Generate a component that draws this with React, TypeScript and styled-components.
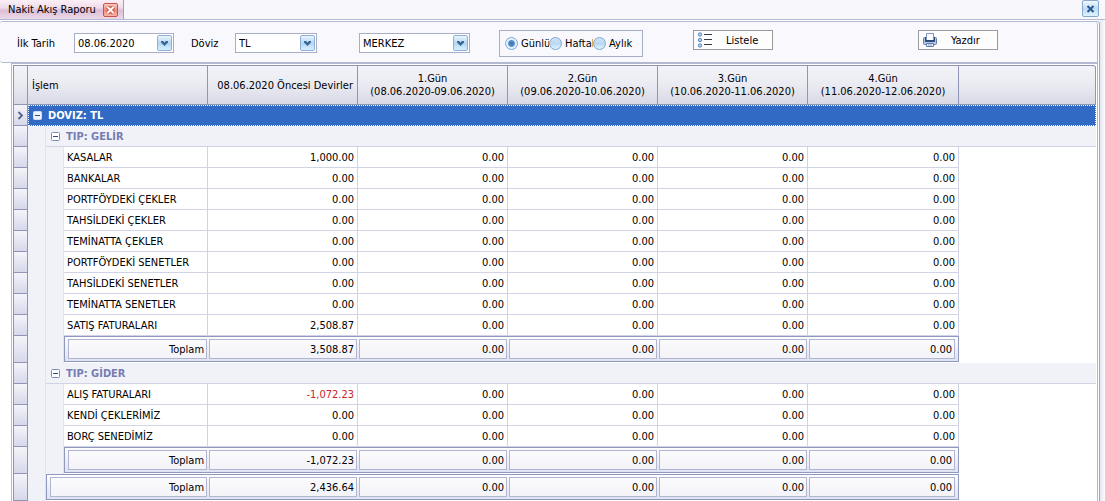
import React from "react";
import styled, { createGlobalStyle, css } from "styled-components";

const line = "#9095b8";
const softLine = "#d0d4e6";
const frameLine = "#b4b9d2";

const GlobalStyle = createGlobalStyle`
  *, *::before, *::after { box-sizing: border-box; }
  html, body { margin: 0; padding: 0; background: #fff; }
  body, button, input, select {
    font-family: "DejaVu Sans Condensed", "DejaVu Sans", sans-serif;
    font-size: 11px;
    line-height: 13px;
    color: #000;
  }
`;

const Page = styled.main`
  display: flex;
  flex-direction: column;
  min-height: 100vh;
  padding-right: 5px;
  background: linear-gradient(to left, #fbfbfd, #e4e6f0 5px, #fff 5px);
`;

const TabStrip = styled.header`
  display: flex;
  align-items: flex-start;
  justify-content: space-between;
  height: 20px;
  margin-right: -5px;
  padding-right: 6px;
  background: #f8f8fc;
  border-bottom: 1px solid ${frameLine};
`;

const Tab = styled.div`
  display: flex;
  align-items: center;
  gap: 7px;
  height: 19px;
  padding: 0 5px 0 8px;
  border-right: 1px solid #a99bb8;
  background: linear-gradient(#fbf0f7, #f0dcea 40%, #dcbdd6 55%, #ecd9e8);
`;

const CloseTab = styled.button`
  display: flex;
  align-items: center;
  justify-content: center;
  width: 15px;
  height: 14px;
  padding: 0;
  border: 1px solid #cc4f48;
  border-radius: 2px;
  background: linear-gradient(#fbd0c8, #f0897c 50%, #f8b4a6);
`;

const CloseWindow = styled.button`
  display: flex;
  align-items: center;
  justify-content: center;
  width: 17px;
  height: 17px;
  padding: 0;
  border: 1px solid #86a9cc;
  border-radius: 2px;
  background: linear-gradient(#f2f9ff, #bfdcf4 50%, #def3ff);
`;

const Panel = styled.section`
  flex: 1;
  display: flex;
  flex-direction: column;
  margin-top: 1px;
  border-top: 1px solid ${frameLine};
  border-right: 1px solid #a3a7c4;
  border-radius: 3px 3px 0 0;
`;

const Toolbar = styled.form`
  display: flex;
  align-items: flex-start;
  height: 41px;
  margin-right: 1px;
  padding: 8px 99px 0 17px;
  background: #f9f9fd;
  border-bottom: 1px solid ${frameLine};
  border-right: 1px solid ${frameLine};
  border-radius: 3px 3px 0 3px;
`;

const FieldLabel = styled.label<{ $width: number }>`
  width: ${(p) => p.$width}px;
  margin-top: 7px;
  white-space: nowrap;
`;

const Field = styled.div<{ $width: number; $gap: number }>`
  position: relative;
  width: ${(p) => p.$width}px;
  height: 20px;
  margin-top: 3px;
  margin-right: ${(p) => p.$gap}px;
  border: 1px solid #a9aec8;
  background: #fff;
`;

const controlText = css`
  width: 100%;
  height: 18px;
  padding: 0 18px 0 3px;
  border: 0;
  outline: 0;
  background: transparent;
`;

const DateInput = styled.input`
  ${controlText}
`;

const Select = styled.select`
  ${controlText}
  appearance: none;
`;

const DropMark = styled.span`
  position: absolute;
  top: 1px;
  right: 1px;
  display: flex;
  align-items: center;
  justify-content: center;
  width: 15px;
  height: 16px;
  border: 1px solid #8fb0d4;
  border-radius: 2px;
  background: linear-gradient(#eaf5fe, #b4d6f2 50%, #d6f0ff);
  pointer-events: none;
`;

const RadioGroup = styled.fieldset`
  display: flex;
  align-items: center;
  width: 144px;
  height: 27px;
  margin: 0 50px 0 0;
  padding: 0 0 0 5px;
  border: 1px solid #a9aec8;
`;

const RadioLabel = styled.label`
  display: flex;
  align-items: center;
  gap: 3px;
  width: 44px;
  overflow: hidden;
  white-space: nowrap;
`;

const Radio = styled.input`
  appearance: none;
  flex: none;
  width: 13px;
  height: 13px;
  margin: 0;
  border: 1px solid #7fa6d0;
  border-radius: 50%;
  background: linear-gradient(#d3e4f4, #b9d8f1 50%, #def4ff);

  &:checked {
    background: radial-gradient(circle, #4379ae 0 1px, #5e97cb 3px, #e0f2fe 4px);
  }
`;

const ToolButton = styled.button`
  display: flex;
  align-items: center;
  width: 80px;
  height: 20px;
  padding: 0 0 0 3px;
  border: 1px solid #9b9b9e;
  background: #fdfdfe;

  & > svg { flex: none; margin-right: 13px; }
`;

const Spacer = styled.div`
  flex: 1;
`;

const GridFrame = styled.div`
  flex: 1;
  margin-right: 1px;
  margin-left: 11px;
  padding: 1px 1px 0 1px;
  border-top: 1px solid ${frameLine};
  border-left: 1px solid ${frameLine};
  border-right: 1px solid ${frameLine};
  background: #fff;
`;

const Grid = styled.table`
  width: 100%;
  table-layout: fixed;
  border-collapse: separate;
  border-spacing: 0;
  border-left: 1px solid ${line};

  th, td { padding: 0; }
`;

const HeadCell = styled.th<{ $align?: string; $last?: boolean }>`
  height: 40px;
  border-top: 1px solid ${line};
  border-bottom: 1px solid ${line};
  border-right: 1px solid ${line};
  border-top-right-radius: ${(p) => (p.$last ? 3 : 0)}px;
  background: linear-gradient(#f3f3f9, #eaeaf2 50%, #d9d9e6);
  font-weight: normal;
  text-align: ${(p) => p.$align || "center"};

  & > span { display: block; padding: 0 4px; white-space: nowrap; }
`;

const Marker = styled.td`
  border-right: 1px solid ${line};
  border-bottom: 1px solid ${line};
  background: linear-gradient(#f4f4fa, #d6d8ea);

  & > svg { display: block; margin: 0 auto; }
`;

const Indent = styled.td`
  background: #f1f2f8;
  border-right: 1px solid #e0e3f0;
`;

const RootGroup = styled.td`
  height: 21px;
  background: #316ac5;
  color: #fff;
  font-weight: bold;
  outline: 1px dotted #fff;
  outline-offset: -1px;
`;

const SubGroup = styled.td`
  height: 21px;
  background: #f1f2f8;
  border-bottom: 1px solid ${softLine};
  color: #767db1;
  font-weight: bold;
`;

const GroupTitle = styled.div`
  display: flex;
  align-items: center;
  gap: 6px;
  padding-left: 5px;
`;

const Toggle = styled.button`
  display: flex;
  width: 9px;
  height: 9px;
  padding: 0;
  border: 0;
  background: none;
`;

const Cell = styled.td<{ $number?: boolean; $negative?: boolean }>`
  height: 21px;
  border-right: 1px solid ${softLine};
  border-bottom: 1px solid ${softLine};
  background: #fff;
  color: ${(p) => (p.$negative ? "#d0202a" : "#000")};
  text-align: ${(p) => (p.$number ? "right" : "left")};
  white-space: nowrap;

  && { padding: 0 3px; }
`;

const TotalFrame = styled.div<{ $first?: boolean; $last?: boolean }>`
  height: 26px;
  margin-bottom: 1px;
  padding: 2px ${(p) => (p.$last ? 3 : 1)}px 2px ${(p) => (p.$first ? 3 : 1)}px;
  border: solid #9198bd;
  border-width: 1px ${(p) => (p.$last ? 1 : 0)}px 1px ${(p) => (p.$first ? 1 : 0)}px;
  background: linear-gradient(#fdfdff, #dfe2f1);
`;

const TotalBox = styled.div`
  height: 20px;
  padding: 3px 2px 0 0;
  border: 1px solid #b0b5d2;
  background: linear-gradient(#fbfbfd, #f3f3f8);
  text-align: right;
  white-space: nowrap;
`;

function Chevron() {
  return (
    <svg width="9" height="8" viewBox="0 0 9 8">
      <path d="M1 2h2L4.500 3.500l1.500-1.500h2v1.500L4.500 7 1 3.500z" fill="#3a6796" />
    </svg>
  );
}

function Cross({ color, outline }: { color: string; outline?: string }) {
  return (
    <svg width="11" height="10" viewBox="0 0 11 10">
      {outline && <path d="M2.500 2l6 6M8.500 2l-6 6" stroke={outline} strokeWidth="4" />}
      <path d="M2.500 2l6 6M8.500 2l-6 6" stroke={color} strokeWidth="2" />
    </svg>
  );
}

function Minus({ inverse }: { inverse?: boolean }) {
  return (
    <svg width="9" height="9" viewBox="0 0 9 9">
      <rect x=".5" y=".5" width="8" height="8" rx="1" fill={inverse ? "#eef2fb" : "#fff"} stroke={inverse ? "#cfdcf2" : "#7d8dba"} />
      <path d="M2 4.500h5" stroke="#2b4a86" />
    </svg>
  );
}

function ListIcon() {
  return (
    <svg width="16" height="16" viewBox="0 0 16 16">
      {[2.5, 8, 13.5].map((y) => (
        <circle key={y} cx="3" cy={y} r="1.700" fill="#b5d6f2" stroke="#5a86b8" />
      ))}
      <path d="M7 2.500h8M7 7.500h8M7 12.500h8" stroke="#333a48" />
    </svg>
  );
}

function PrintIcon() {
  return (
    <svg width="16" height="16" viewBox="0 0 16 16">
      <path d="M1.500 6.500q0-1 1-1h11q1 0 1 1v5q0 1-1 1h-11q-1 0-1-1z" fill="#b7c8e2" stroke="#5f7cab" />
      <path d="M4.500 1.500h7v7h-7z" fill="#f7faff" stroke="#7e96bd" />
      <path d="M3.500 5v4.500h9V5" fill="none" stroke="#2a4372" />
      <path d="M4 8h8v2H4z" fill="#2f4b7d" />
      <path d="M4.500 11.500h7v3h-7z" fill="#eef5ff" stroke="#5f7cab" />
      <path d="M6 13h4" stroke="#88a2c8" />
    </svg>
  );
}

function RowPointer() {
  return (
    <svg width="7" height="9" viewBox="0 0 7 9">
      <path d="M1.500 1l3.500 3.500L1.500 8" fill="none" stroke="#5c608c" strokeWidth="1.800" />
    </svg>
  );
}

const days = [
  ["1.Gün", "(08.06.2020-09.06.2020)"],
  ["2.Gün", "(09.06.2020-10.06.2020)"],
  ["3.Gün", "(10.06.2020-11.06.2020)"],
  ["4.Gün", "(11.06.2020-12.06.2020)"],
];

const groups = [
  {
    title: "TIP: GELİR",
    total: "3,508.87",
    rows: [
      ["KASALAR", "1,000.00"],
      ["BANKALAR", "0.00"],
      ["PORTFÖYDEKİ ÇEKLER", "0.00"],
      ["TAHSİLDEKİ ÇEKLER", "0.00"],
      ["TEMİNATTA ÇEKLER", "0.00"],
      ["PORTFÖYDEKİ SENETLER", "0.00"],
      ["TAHSİLDEKİ SENETLER", "0.00"],
      ["TEMİNATTA SENETLER", "0.00"],
      ["SATIŞ FATURALARI", "2,508.87"],
    ],
  },
  {
    title: "TIP: GİDER",
    total: "-1,072.23",
    rows: [
      ["ALIŞ FATURALARI", "-1,072.23"],
      ["KENDİ ÇEKLERİMİZ", "0.00"],
      ["BORÇ SENEDİMİZ", "0.00"],
    ],
  },
];

function TotalRow({ value, grand }: { value: string; grand?: boolean }) {
  return (
    <tr>
      <Marker />
      <Indent />
      {!grand && <Indent />}
      <td colSpan={grand ? 2 : 1}>
        <TotalFrame $first>
          <TotalBox>Toplam</TotalBox>
        </TotalFrame>
      </td>
      <td>
        <TotalFrame>
          <TotalBox>{value}</TotalBox>
        </TotalFrame>
      </td>
      {days.map(([day], i) => (
        <td key={day}>
          <TotalFrame $last={i === days.length - 1}>
            <TotalBox>0.00</TotalBox>
          </TotalFrame>
        </td>
      ))}
      <td />
    </tr>
  );
}

function CashFlowGrid() {
  return (
    <Grid>
      <colgroup>
        <col style={{ width: 14 }} />
        <col style={{ width: 18 }} />
        <col style={{ width: 18 }} />
        <col style={{ width: 144 }} />
        <col style={{ width: 150 }} />
        <col style={{ width: 150 }} />
        <col style={{ width: 150 }} />
        <col style={{ width: 150 }} />
        <col style={{ width: 151 }} />
        <col />
      </colgroup>
      <thead>
        <tr>
          <HeadCell />
          <HeadCell colSpan={3} $align="left"><span>İşlem</span></HeadCell>
          <HeadCell $align="right"><span>08.06.2020 Öncesi Devirler</span></HeadCell>
          {days.map(([day, range]) => (
            <HeadCell key={day}>
              <span>{day}</span>
              <span>{range}</span>
            </HeadCell>
          ))}
          <HeadCell $last />
        </tr>
      </thead>
      <tbody>
        <tr>
          <Marker><RowPointer /></Marker>
          <RootGroup colSpan={9}>
            <GroupTitle>
              <Toggle type="button" aria-label="Daralt"><Minus inverse /></Toggle>
              DOVIZ: TL
            </GroupTitle>
          </RootGroup>
        </tr>
        {groups.map((group) => (
          <React.Fragment key={group.title}>
            <tr>
              <Marker />
              <Indent />
              <SubGroup colSpan={8}>
                <GroupTitle>
                  <Toggle type="button" aria-label="Daralt"><Minus /></Toggle>
                  {group.title}
                </GroupTitle>
              </SubGroup>
            </tr>
            {group.rows.map(([name, carried]) => (
              <tr key={name}>
                <Marker />
                <Indent />
                <Indent />
                <Cell>{name}</Cell>
                <Cell $number $negative={carried.startsWith("-")}>{carried}</Cell>
                {days.map(([day]) => (
                  <Cell key={day} $number>0.00</Cell>
                ))}
                <td />
              </tr>
            ))}
            <TotalRow value={group.total} />
          </React.Fragment>
        ))}
        <TotalRow value="2,436.64" grand />
      </tbody>
    </Grid>
  );
}

export default function App() {
  return (
    <>
      <GlobalStyle />
      <Page>
        <TabStrip>
          <Tab>
            Nakit Akış Raporu
            <CloseTab type="button" aria-label="Sekmeyi kapat"><Cross color="#fff" outline="#cf4a40" /></CloseTab>
          </Tab>
          <CloseWindow type="button" aria-label="Kapat"><Cross color="#2a5a8c" /></CloseWindow>
        </TabStrip>
        <Panel>
          <Toolbar onSubmit={(e) => e.preventDefault()}>
            <FieldLabel htmlFor="date" $width={57}>İlk Tarih</FieldLabel>
            <Field $width={100} $gap={17}>
              <DateInput id="date" type="text" defaultValue="08.06.2020" />
              <DropMark><Chevron /></DropMark>
            </Field>
            <FieldLabel htmlFor="currency" $width={44}>Döviz</FieldLabel>
            <Field $width={82} $gap={42}>
              <Select id="currency"><option>TL</option></Select>
              <DropMark><Chevron /></DropMark>
            </Field>
            <Field $width={111} $gap={29}>
              <Select aria-label="Şube"><option>MERKEZ</option></Select>
              <DropMark><Chevron /></DropMark>
            </Field>
            <RadioGroup aria-label="Dönem">
              <RadioLabel><Radio type="radio" name="period" defaultChecked />Günlü</RadioLabel>
              <RadioLabel><Radio type="radio" name="period" />Haftal</RadioLabel>
              <RadioLabel><Radio type="radio" name="period" />Aylık</RadioLabel>
            </RadioGroup>
            <ToolButton type="button"><ListIcon />Listele</ToolButton>
            <Spacer />
            <ToolButton type="button"><PrintIcon />Yazdır</ToolButton>
          </Toolbar>
          <GridFrame>
            <CashFlowGrid />
          </GridFrame>
        </Panel>
      </Page>
    </>
  );
}
